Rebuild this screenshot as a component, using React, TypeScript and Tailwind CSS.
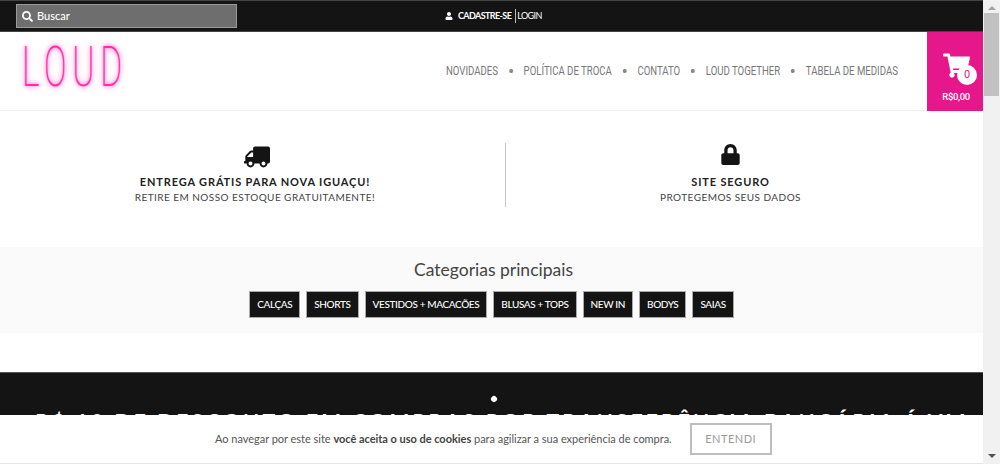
import { FaSearch, FaUser, FaTruck, FaLock, FaShoppingCart } from 'react-icons/fa';

const lato = "font-['Lato','Liberation_Sans',sans-serif]";
const roboto = "font-['Roboto','Liberation_Sans',sans-serif]";

const menu = ['NOVIDADES', 'POLÍTICA DE TROCA', 'CONTATO', 'LOUD TOGETHER', 'TABELA DE MEDIDAS'];
const categorias = ['CALÇAS', 'SHORTS', 'VESTIDOS + MACACÕES', 'BLUSAS + TOPS', 'NEW IN', 'BODYS', 'SAIAS'];

const App = () => {
  return (
    <div className={`relative flex h-[464px] w-[1000px] overflow-hidden bg-white ${lato}`}>
      <div className="w-[983px] shrink-0">
        {/* Barra superior */}
        <div className="flex h-[32px] items-center border-y border-[#444444] bg-[#141414] pl-4">
          <div className="flex h-[24px] w-[221px] items-center gap-[4px] border border-[#9a9a9a] bg-[#6e6e6e] pl-[5px] text-[11px] font-medium text-white">
            <FaSearch size={11} />
            Buscar
          </div>
          <div className="ml-[208px] flex items-center text-[9px] tracking-[-0.6px] text-white">
            <FaUser size={8} className="mr-[5px]" />
            <span className="font-bold">CADASTRE-SE</span>
            <span className="ml-[4px] border-l border-[#bbbbbb] pl-px">LOGIN</span>
          </div>
        </div>

        {/* Logo e menu */}
        <div className="flex h-[79px] items-start border-b border-[#f0f0f0]">
          <div className="ml-[22px] mt-[5px] h-[50px] w-[102px]">
            <span
              className={`inline-block origin-left scale-x-[0.6] text-[56px] leading-[60px] font-extralight tracking-[9.5px] text-[#ff2fa8] [text-shadow:0_0_5px_#ff6cc4,0_0_9px_#ff9ad8] ${roboto}`}
            >
              LOUD
            </span>
          </div>
          <nav className={`ml-auto mt-[30px] flex origin-right scale-x-[0.8] items-center text-[12px] text-[#777777] ${roboto}`}>
            {menu.map((item, i) => (
              <div key={item} className="flex items-center">
                {i > 0 && <span className="mx-[13.5px] h-[4px] w-[5px] rounded-full bg-[#888888]" />}
                <span>{item}</span>
              </div>
            ))}
          </nav>
          <div className="ml-[29px] flex h-[79px] w-[56px] flex-col items-center bg-[#e5178a] text-white">
            <div className="relative mt-[20px] h-[34px] w-[36px]">
              <FaShoppingCart size={27} className="ml-[6px]" />
              <span className={`absolute right-[-4px] top-[13px] flex h-[20px] w-[20px] items-center justify-center rounded-full bg-white text-[11px] text-[#e5178a] ${roboto}`}>
                0
              </span>
            </div>
            <span className={`ml-[2px] mt-[4px] text-[9.5px] font-medium tracking-[-0.4px] ${roboto}`}>R$0,00</span>
          </div>
        </div>

        {/* Entrega e seguranca */}
        <div className="flex h-[136px] items-start pt-[32px]">
          <div className="flex h-[64px] w-[506px] flex-col items-center border-r border-[#c8c8c8] pl-[5px] text-center">
            <FaTruck size={26} color="#141414" className="ml-1 mt-px -scale-x-100" />
            <strong className="mt-[4px] text-[11px] font-bold leading-[16px] tracking-[0.85px] text-[#222222]">
              ENTREGA GRÁTIS PARA NOVA IGUAÇU!
            </strong>
            <span className="text-[10px] leading-[14px] tracking-[0.45px] text-[#444444]">
              RETIRE EM NOSSO ESTOQUE GRATUITAMENTE!
            </span>
          </div>
          <div className="flex h-[64px] flex-1 flex-col items-center pr-[28px] text-center">
            <FaLock size={21} color="#141414" className="mt-px" />
            <strong className="mt-[9px] text-[11px] font-bold leading-[16px] tracking-[0.85px] text-[#222222]">
              SITE SEGURO
            </strong>
            <span className="text-[10px] leading-[14px] tracking-[0.45px] text-[#444444]">
              PROTEGEMOS SEUS DADOS
            </span>
          </div>
        </div>

        {/* Categorias */}
        <div className="flex h-[86px] flex-col items-center bg-[#fafafa] pt-[11px]">
          <h2 className="ml-[4px] text-[17.5px] leading-[24px] text-[#444444]">Categorias principais</h2>
          <div className="mt-[9px] flex gap-[6px]">
            {categorias.map((c) => (
              <span
                key={c}
                className="flex h-[27px] items-center border border-[#aaaaaa] bg-[#141414] px-[7px] text-[10px] font-medium tracking-[-0.37px] text-white"
              >
                {c}
              </span>
            ))}
          </div>
        </div>

        {/* Faixa preta */}
        <div className="mt-[39px] flex h-[92px] flex-col items-center overflow-hidden whitespace-nowrap border-t border-[#555555] bg-[#141414] text-white">
          <span className="ml-[5px] mt-[23px] h-[6px] w-[6px] rotate-45 rounded-full bg-white" />
          <span className="ml-[25px] mt-[5px] text-[21px] font-bold leading-[28px] tracking-[3.16px]">
            R$ 10 DE DESCONTO EM COMPRAS POR TRANSFERÊNCIA BANCÁRIA Á VIA
          </span>
        </div>
      </div>

      {/* Barra de rolagem */}
      <div className="flex w-[17px] flex-col items-center bg-[#f1f1f1]">
        <span className="mt-[6px] h-0 w-0 border-x-[4px] border-b-[4px] border-x-transparent border-b-[#a3a3a3]" />
        <div className="mt-[3px] h-[83px] w-[15px] bg-[#c1c1c1]" />
        <span className="mt-auto mb-[6px] h-0 w-0 border-x-[4px] border-t-[4px] border-x-transparent border-t-[#505050]" />
      </div>

      {/* Aviso de cookies */}
      <div className="absolute bottom-0 left-0 flex h-[49px] w-[983px] items-center border-b border-[#e6e6e6] bg-white pl-[215px]">
        <p className="text-[11px] tracking-[-0.025px] text-[#555555]">
          Ao navegar por este site <strong className="font-bold text-[#444444]">você aceita o uso de cookies</strong> para agilizar a sua experiência de compra.
        </p>
        <button className="ml-[18px] h-[32px] w-[82px] border-2 border-[#bdbdbd] bg-white text-[11px] tracking-[0.5px] text-[#999999]">
          ENTENDI
        </button>
      </div>
    </div>
  );
};

export default App;
